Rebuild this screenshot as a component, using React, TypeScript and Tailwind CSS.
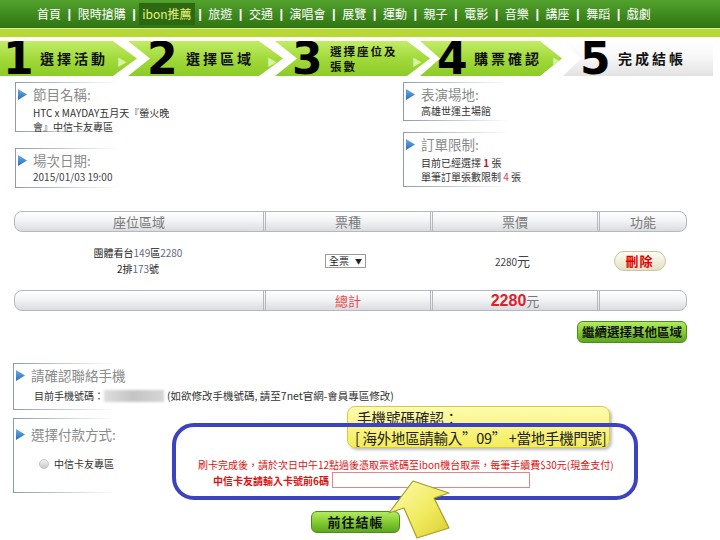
import React from 'react'

const navItems = ['首頁', '限時搶購', 'ibon推薦', '旅遊', '交通', '演唱會', '展覽', '運動', '親子', '電影', '音樂', '講座', '舞蹈', '戲劇']

const boxLines =
  '[background:linear-gradient(to_right,#8c9ab4,#ffffff_90%)_top/100%_1px_no-repeat,linear-gradient(to_right,#8c9ab4,#ffffff_90%)_bottom/100%_1px_no-repeat]'

function Tri() {
  return (
    <svg width="9" height="11" viewBox="0 0 9 11" className="shrink-0">
      <defs>
        <linearGradient id="tri" x1="0" y1="0" x2="0" y2="1">
          <stop offset="0" stopColor="#6aaee8" />
          <stop offset="1" stopColor="#2a6cb8" />
        </linearGradient>
      </defs>
      <polygon points="0,0 9,5.5 0,11" fill="url(#tri)" />
    </svg>
  )
}

function InfoBox({ title, className, children }: { title: string; className?: string; children?: React.ReactNode }) {
  return (
    <div className={`border-l border-[#8c9ab4] ${boxLines} ${className ?? ''}`}>
      <div className="flex h-[18px] items-center gap-[6px] pl-[2px]">
        <Tri />
        <span className="whitespace-nowrap text-[13.5px] text-[#8a8a8a]">{title}</span>
      </div>
      {children}
    </div>
  )
}

function Arrow() {
  return <span className="text-[10px] leading-none text-[#d6f2a4]">▶</span>
}

const green = 'bg-gradient-to-b from-[#c2ec66] via-[#a2da3a] to-[#8ccb28]'
const num = 'font-["DejaVu_Sans"] text-[44px] font-bold leading-none text-black'
const label = 'text-[14px] font-bold tracking-[3px] text-[#111]'

export default function App() {
  return (
    <div className='relative h-[540px] w-[720px] overflow-hidden bg-white font-["Noto_Sans_CJK_TC",sans-serif] text-[#222]'>
      {/* 導覽列 */}
      <div className="flex h-[28px] items-center bg-gradient-to-b from-[#52a22c] to-[#2f7412] pl-[37px]">
        {navItems.map((item, i) => (
          <React.Fragment key={item}>
            {i > 0 && <span className='mx-[6.5px] font-["Liberation_Sans"] text-[13px] font-bold text-white'>|</span>}
            {item === 'ibon推薦' ? (
              <span className="-mx-[3px] flex h-[22px] items-center bg-[#2d6913] px-[3px] text-[12px] text-[#e6f27a]">{item}</span>
            ) : (
              <span className="text-[12px] text-white">{item}</span>
            )}
          </React.Fragment>
        ))}
      </div>
      <div className="h-[1px] bg-[#d6eca4]" />
      <div className="h-[8px] bg-[#b8d834]" />

      {/* 步驟 */}
      <div className="mt-[4px] flex h-[35px]">
        <div className={`flex w-[137px] shrink-0 items-center pl-[3px] ${green} [clip-path:polygon(0_0,113px_0,137px_50%,113px_100%,0_100%)]`}>
          <span className={`w-[34px] ${num}`}>1</span>
          <span className={`ml-[3px] w-[75px] ${label}`}>選擇活動</span>
          <span className="ml-[2px]"><Arrow /></span>
        </div>
        <div className={`-ml-[9px] flex w-[155px] shrink-0 items-center pl-[19px] ${green} [clip-path:polygon(0_0,131px_0,155px_50%,131px_100%,0_100%,22px_50%)]`}>
          <span className={`w-[36px] ${num}`}>2</span>
          <span className={`ml-[3px] w-[75px] ${label}`}>選擇區域</span>
          <span className="ml-[6px]"><Arrow /></span>
        </div>
        <div className={`-ml-[8px] flex w-[155px] shrink-0 items-center pl-[17px] ${green} [clip-path:polygon(0_0,132px_0,155px_50%,132px_100%,0_100%,22px_50%)]`}>
          <span className={`w-[36px] ${num}`}>3</span>
          <span className="ml-[2px] w-[75px] text-[11.5px] font-bold leading-[15px] tracking-[2px] text-[#111]">
            選擇座位及
            <br />
            張數
          </span>
          <span className="ml-[7px]"><Arrow /></span>
        </div>
        <div className={`-ml-[10px] flex w-[142px] shrink-0 items-center pl-[17px] ${green} [clip-path:polygon(0_0,120px_0,142px_50%,120px_100%,0_100%,20px_50%)]`}>
          <span className={`w-[36px] ${num}`}>4</span>
          <span className={`ml-[2px] w-[75px] ${label}`}>購票確認</span>
          <span className="ml-[5px]"><Arrow /></span>
        </div>
        <div className="ml-[1px] flex w-[150px] shrink-0 items-center bg-gradient-to-b from-white via-[#f6f6f6] to-[#e2e2e2] pl-[17px] [clip-path:polygon(0_0,100%_0,100%_100%,0_100%,18px_50%)]">
          <span className={`w-[36px] ${num}`}>5</span>
          <span className={`ml-[2px] ${label}`}>完成結帳</span>
        </div>
      </div>

      {/* 節目資訊 */}
      <div className="mt-[6px] flex">
        <div className="flex w-[403px] shrink-0 flex-col gap-[16px] pl-[15px]">
          <InfoBox title="節目名稱:" className="h-[50px] w-[115px] pt-[3px]">
            <div className="mt-[3px] whitespace-nowrap pl-[17px] text-[10px] leading-[14px] text-[#333]">
              HTC x MAYDAY五月天『螢火晚
              <br />
              會』中信卡友專區
            </div>
          </InfoBox>
          <InfoBox title="場次日期:" className="h-[40px] w-[115px] pt-[3px]">
            <div className="mt-[1px] pl-[17px] text-[10px] leading-[14px] text-[#444]">2015/01/03 19:00</div>
          </InfoBox>
        </div>
        <div className="flex flex-col gap-[11px]">
          <InfoBox title="表演場地:" className="h-[39px] w-[118px] pt-[3px]">
            <div className="mt-[1px] pl-[17px] text-[10px] leading-[14px] text-[#333]">高雄世運主場館</div>
          </InfoBox>
          <InfoBox title="訂單限制:" className="h-[55px] w-[118px] pt-[3px]">
            <div className="mt-[3px] whitespace-nowrap pl-[17px] text-[10px] leading-[14px] text-[#333]">
              目前已經選擇 <b className="text-[#c8102e]">1</b> 張
              <br />
              單筆訂單張數限制 <span className="text-[#e04050]">4</span> 張
            </div>
          </InfoBox>
        </div>
      </div>

      {/* 座位表 */}
      <div className="ml-[14px] mt-[23px] w-[673px]">
        <div className="flex h-[21px] rounded-[8px] border border-[#b5b9bf] bg-gradient-to-b from-white via-[#f1f2f4] to-[#d9dce0] text-[13px] text-[#7a7a7a]">
          <div className="flex w-[248px] items-center justify-center">座位區域</div>
          <div className="flex w-[167px] items-center justify-center border-l-[3px] border-double border-[#b4b8be]">票種</div>
          <div className="flex w-[167px] items-center justify-center border-l-[3px] border-double border-[#b4b8be]">票價</div>
          <div className="flex flex-1 items-center justify-center border-l-[3px] border-double border-[#b4b8be]">功能</div>
        </div>
        <div className="flex h-[58px] items-center">
          <div className="w-[248px] text-center text-[10px] leading-[16px]">
            團體看台<span className="text-[#5c6b82]">149</span>區<span className="text-[#5c6b82]">2280</span>
            <br />
            2排<span className="text-[#5c6b82]">173</span>號
          </div>
          <div className="flex w-[167px] justify-center">
            <div className="flex h-[14px] w-[41px] items-center justify-between border border-[#9a9a9a] bg-white px-[3px] text-[10px] leading-none">
              <span>全票</span>
              <span className="text-[7px]">▼</span>
            </div>
          </div>
          <div className="flex w-[167px] items-baseline justify-center text-[#444]">
            <span className="text-[10px]">2280</span>
            <span className="text-[13px]">元</span>
          </div>
          <div className="flex flex-1 justify-center pr-[4px]">
            <div className="flex h-[20px] w-[52px] items-center justify-center rounded-full border border-[#c9c6a6] bg-gradient-to-b from-[#fffef4] to-[#e3e0c4] text-[13px] font-bold tracking-[1px] text-[#e00000]">
              刪除
            </div>
          </div>
        </div>
        <div className="flex h-[21px] rounded-[8px] border border-[#b5b9bf] bg-gradient-to-b from-white via-[#f1f2f4] to-[#d9dce0]">
          <div className="w-[248px]" />
          <div className="flex w-[167px] items-center justify-center border-l-[3px] border-double border-[#b4b8be] text-[13px] text-[#e84848]">總計</div>
          <div className="flex w-[167px] items-center justify-center border-l-[3px] border-double border-[#b4b8be]">
            <span className='font-["Liberation_Sans"] text-[16px] font-bold leading-none text-[#e0202a]'>2280</span>
            <span className="text-[13px] leading-none text-[#777]">元</span>
          </div>
          <div className="flex-1 border-l-[3px] border-double border-[#b4b8be]" />
        </div>
      </div>

      <div className="mr-[33px] mt-[10px] flex justify-end">
        <div className="flex h-[22px] w-[110px] items-center justify-center rounded-[6px] border border-[#4c8c1c] bg-gradient-to-b from-[#b2ec5e] via-[#84cc32] to-[#5ea61e] text-[12.5px] font-bold text-[#111]">
          繼續選擇其他區域
        </div>
      </div>

      {/* 聯絡手機 */}
      <InfoBox title="請確認聯絡手機" className="ml-[13px] mt-[20px] h-[47px] w-[113px] pt-[3px]">
        <div className="mt-[4px] flex items-center whitespace-nowrap pl-[20px] text-[10px] leading-[16px] text-[#333]">
          <span className="shrink-0">目前手機號碼：</span>
          <span className="h-[12px] w-[60px] shrink-0 bg-gradient-to-r from-[#dedede] via-[#c4c4c4] to-[#d6d6d6] blur-[1px]" />
          <span className="ml-[3px] shrink-0 text-[10.5px]">(如欲修改手機號碼, 請至7net官網-會員專區修改)</span>
        </div>
      </InfoBox>

      {/* 付款方式 */}
      <div className="mt-[8px] flex">
        <InfoBox title="選擇付款方式:" className="ml-[13px] h-[75px] w-[113px] shrink-0 pt-[7px]">
          <div className="mt-[13px] flex items-center gap-[5px] whitespace-nowrap pl-[25px] text-[10px] leading-[16px] text-[#333]">
            <span className="h-[10px] w-[10px] shrink-0 rounded-full border border-[#c4c4c4] bg-gradient-to-b from-[#f4f4f4] to-[#c8c8c8]" />
            中信卡友專區
          </div>
        </InfoBox>
        <div className="ml-[72px] mt-[40px] flex flex-col text-[10px] text-[#dd1111]">
          <div className="whitespace-nowrap leading-[14px]">刷卡完成後，請於次日中午12點過後憑取票號碼至ibon機台取票，每筆手續費$30元(現金支付)</div>
          <div className="flex h-[16px] items-center pl-[15px]">
            <span className="whitespace-nowrap font-bold">中信卡友請輸入卡號前6碼</span>
            <span className="ml-[3px] h-[16px] w-[198px] shrink-0 border border-[#e08888] bg-white" />
          </div>
        </div>
      </div>

      <div className="ml-[311px] mt-[18px] flex h-[22px] w-[89px] items-center justify-center rounded-[6px] border border-[#4c8c1c] bg-gradient-to-b from-[#b2ec5e] via-[#84cc32] to-[#5ea61e] text-[13px] font-bold tracking-[1px] text-[#111]">
        前往結帳
      </div>

      {/* 標註 */}
      <div className="absolute left-[347px] top-[406px] h-[42px] w-[263px] rounded-[8px] border border-[#d8cc3c] bg-gradient-to-b from-[#fffcae] to-[#f4ec58] pl-[9px] pt-[1px] text-[14.5px] leading-[20px] text-[#222] shadow-[2px_2px_3px_rgba(0,0,0,0.25)]">
        <div>手機號碼確認：</div>
        <div className="-ml-[2px] whitespace-nowrap tracking-[-0.3px]">[ 海外地區請輸入”09” +當地手機門號]</div>
      </div>
      <div className="absolute left-[172px] top-[423px] h-[77px] w-[466px] rounded-[22px] border-[4px] border-[#3c42c0]" />
      <svg className="absolute left-[385px] top-[478px]" width="72" height="62" viewBox="0 0 72 62">
        <defs>
          <linearGradient id="arr" x1="0" y1="0" x2="1" y2="1">
            <stop offset="0" stopColor="#fdfcb4" />
            <stop offset="0.6" stopColor="#f0ea5c" />
            <stop offset="1" stopColor="#d8cc30" />
          </linearGradient>
        </defs>
        <polygon points="28,3 64,15 49,20 64,50 32,60 19,30 4,35" fill="url(#arr)" stroke="#a89c28" strokeWidth="1.2" strokeLinejoin="round" />
      </svg>
    </div>
  )
}
